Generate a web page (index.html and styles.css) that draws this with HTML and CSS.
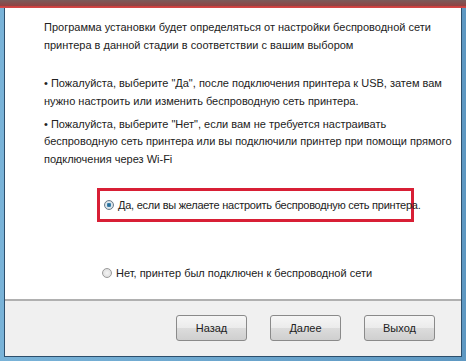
FILE: index.html
```html
<!DOCTYPE html>
<html lang="ru">
<head>
    <meta charset="UTF-8">
    <title>Установка</title>
    <link rel="stylesheet" href="styles.css">
</head>
<body>
    <div class="window">
        <div class="titlebar"></div>
        <div class="dialog">
            <div class="content">
                <p class="intro">Программа установки будет определяться от настройки беспроводной сети<br>принтера в данной стадии в соответствии с вашим выбором</p>
                <p class="note">• Пожалуйста, выберите "Да", после подключения принтера к USB, затем вам<br>нужно настроить или изменить беспроводную сеть принтера.</p>
                <p class="note">• Пожалуйста, выберите "Нет", если вам не требуется настраивать<br>беспроводную сеть принтера или вы подключили принтер при помощи прямого<br>подключения через Wi-Fi</p>
                <div class="choice selected">
                    <span class="radio checked"></span>
                    <span>Да, если вы желаете настроить беспроводную сеть принтера.</span>
                </div>
                <div class="choice plain">
                    <span class="radio"></span>
                    <span>Нет, принтер был подключен к беспроводной сети</span>
                </div>
            </div>
            <div class="footer">
                <button class="btn">Назад</button>
                <button class="btn">Далее</button>
                <button class="btn">Выход</button>
            </div>
        </div>
    </div>
</body>
</html>
```
FILE: styles.css
```css
* {margin:0;padding:0;box-sizing:border-box;}
body {width:466px;height:361px;overflow:hidden;background:#6fa9cf;font-family:'Liberation Sans', Arial, sans-serif;font-size:11px;color:#222;}
.window {height:361px;padding:0 4px 4px 4px;display:flex;flex-direction:column;background:linear-gradient(90deg,#79b3d8,#5e98c2);}
.titlebar {height:8px;background:linear-gradient(#7a5a5a,#8e4444 70%,#c63b3b 70%,#d54a4a);margin:0 -4px;}
.dialog {flex:1;display:flex;flex-direction:column;background:#fff;border-left:1px solid #2d4f6c;border-right:1px solid #2d4f6c;border-bottom:1px solid #2d4f6c;}
.content {flex:1;padding:11px 0 0 39px;}
.content p {line-height:17.5px;}
.intro {margin-bottom:21px;}
.note {margin-bottom:5.5px;}
.choice {display:flex;align-items:center;gap:4px;white-space:nowrap;}
.selected {margin:20px 0 0 53px;width:317px;height:34px;border:3px solid #d81f35;padding-left:4px;letter-spacing:-0.25px;}
.plain {margin:45px 0 0 58px;}
.radio {flex:none;width:10px;height:10px;border-radius:50%;border:1px solid #9a9a9a;background:radial-gradient(circle,#f4f4f4,#d8d8d8);}
.radio.checked {background:radial-gradient(circle,#1f5f86 0,#3d86b3 35%,#dfe8ee 45%,#c8d0d6 100%);border-color:#6b7c88;}
.footer {height:57px;background:#f0f0f0;border-top:2px solid #b0b0b0;display:flex;justify-content:flex-end;align-items:center;gap:23px;padding:0 26px 2px 0;}
.btn {width:71px;height:26px;border:1px solid #8a8a8a;border-radius:3px;background:linear-gradient(#f6f6f6 0,#ebebeb 50%,#dcdcdc 51%,#cfcfcf 100%);font-family:'Liberation Sans', Arial, sans-serif;font-size:11px;color:#222;}
```
